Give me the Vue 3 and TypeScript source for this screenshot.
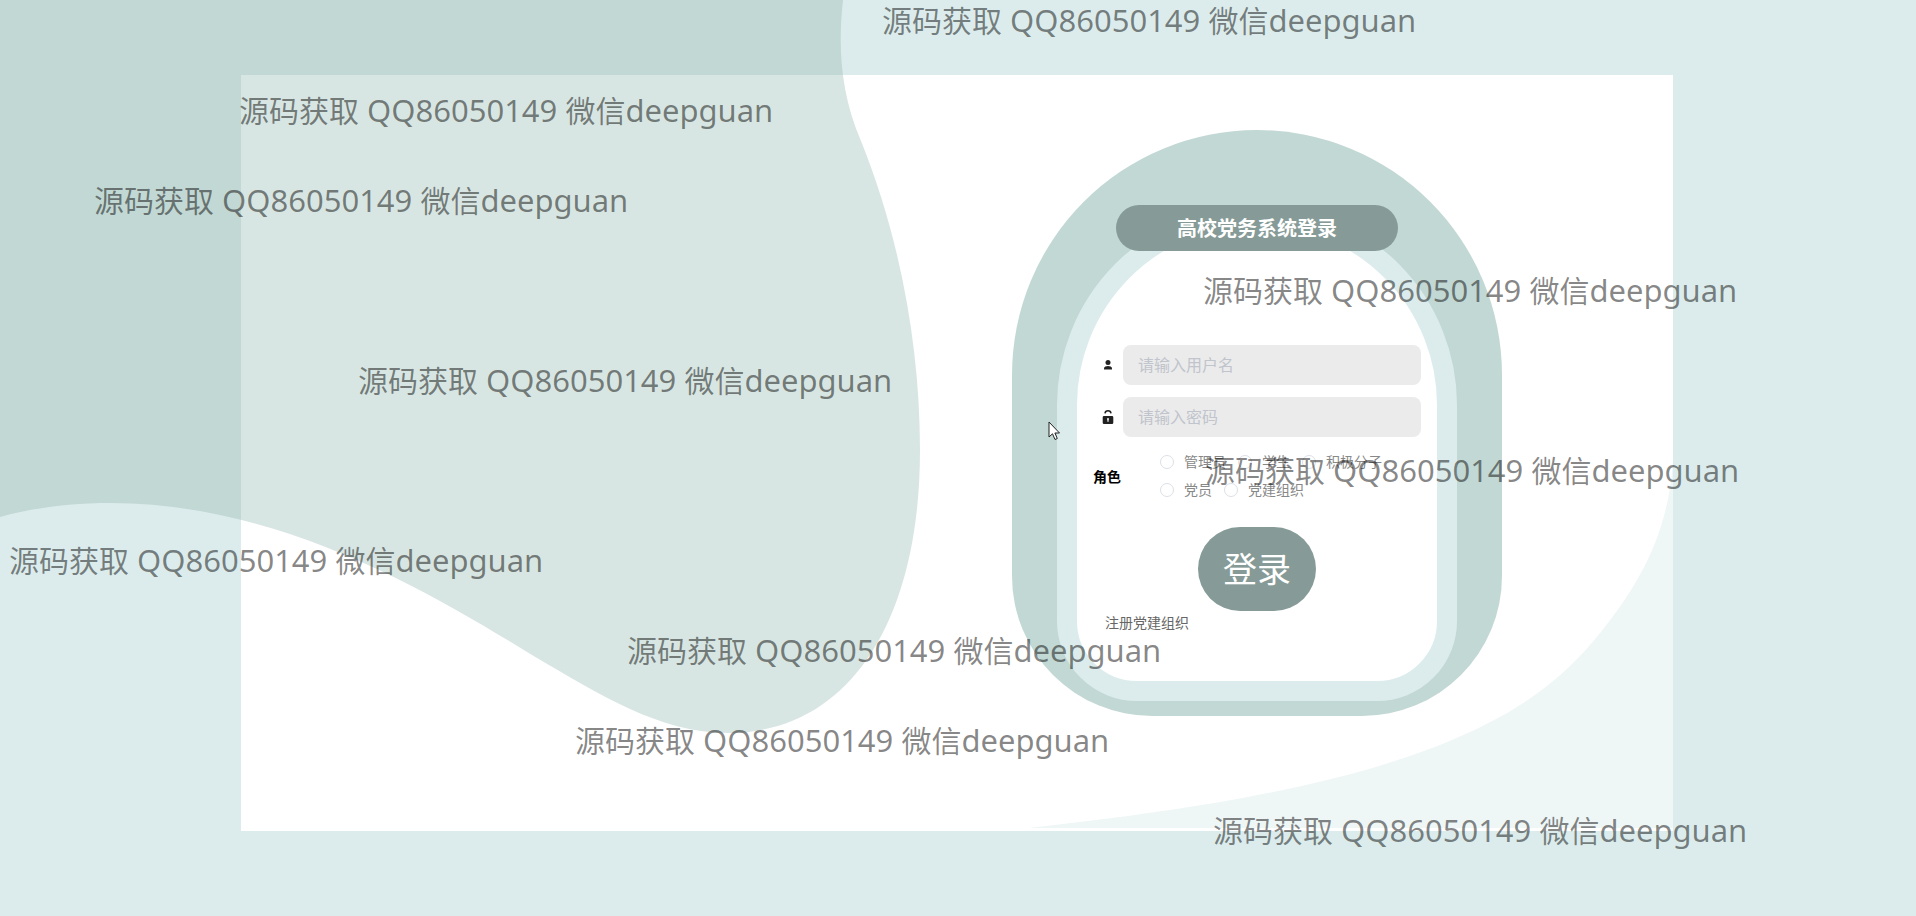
<script setup lang="ts">
import { ref } from 'vue'

interface Mark {
  x: number
  y: number
}

const username = ref('')
const password = ref('')
const role = ref('')
const roles: string[] = ['管理员', '学生', '积极分子', '党员', '党建组织']

const marks: Mark[] = [
  { x: 882, y: 20 },
  { x: 239, y: 110 },
  { x: 94, y: 200 },
  { x: 1203, y: 290 },
  { x: 358, y: 380 },
  { x: 1205, y: 470 },
  { x: 9, y: 560 },
  { x: 627, y: 650 },
  { x: 575, y: 740 },
  { x: 1213, y: 830 },
]

const place = (m: Mark) => ({
  left: `${(m.x / 1916) * 100}%`,
  top: `${(m.y / 916) * 100}%`,
})
</script>

<template>
  <main class="page">
    <svg class="scenery" viewBox="0 0 1916 916" preserveAspectRatio="none" aria-hidden="true">
      <path
        class="blob"
        d="M0 0H843C838 45 840 92 861 141C901 240 920 350 920 450C920 620 850 733 728 733C660 733 600 695 532 655C430 592 280 503 110 503C70 503 32 508 0 517Z"
      />
    </svg>

    <section class="panel">
      <svg class="swoosh" viewBox="0 0 644 378" preserveAspectRatio="none" aria-hidden="true">
        <path d="M644 0C642 75 615 130 565 190C535 226 500 252 461 272C360 325 210 355 0 378H644Z" />
      </svg>
      <form class="arch" @submit.prevent>
        <div class="card">
          <h1 class="title">高校党务系统登录</h1>
          <div class="fields">
            <label class="field">
              <svg class="icon" viewBox="0 0 16 16" role="img" aria-label="用户名">
                <circle cx="8" cy="5.600" r="2.500" />
                <path d="M4 12.500V11.200C4 9.600 6.400 8.900 8 8.900S12 9.600 12 11.200V12.500Z" />
              </svg>
              <input v-model="username" type="text" placeholder="请输入用户名" />
            </label>
            <label class="field">
              <svg class="icon" viewBox="0 0 16 16" role="img" aria-label="密码">
                <path class="shackle" d="M5 4.400C5.400 0.900 10.600 0.900 11 4.400" />
                <path
                  fill-rule="evenodd"
                  d="M4 7H12Q13.300 7 13.300 8.200V13.800Q13.300 15 12 15H4Q2.700 15 2.700 13.800V8.200Q2.700 7 4 7ZM8 9A1 1 0 0 0 7.400 10.800V12.800H8.600V10.800A1 1 0 0 0 8 9Z"
                />
              </svg>
              <input v-model="password" type="password" placeholder="请输入密码" />
            </label>
          </div>
          <fieldset class="roles" aria-labelledby="role-name">
            <span id="role-name" class="role-name">角色</span>
            <div class="options">
              <label v-for="r in roles" :key="r" class="option">
                <input v-model="role" type="radio" name="role" :value="r" />
                <span>{{ r }}</span>
              </label>
            </div>
          </fieldset>
          <button class="submit" type="submit">登录</button>
          <a class="register" href="#register">注册党建组织</a>
        </div>
      </form>
    </section>

    <div class="marks" aria-hidden="true">
      <span v-for="(m, i) in marks" :key="i" class="mark" :style="place(m)">源码获取<span class="latin"> QQ86050149 </span>微信<span class="latin">deepguan</span></span>
    </div>

    <svg class="pointer" viewBox="0 0 12 20" aria-hidden="true">
      <path d="M1 1V16L4.500 12.800L7 18.500L9.300 17.500L6.900 12H11.500Z" />
    </svg>
  </main>
</template>

<style>
body {
  margin: 0;
}
</style>

<style scoped>
.page {
  position: relative;
  box-sizing: border-box;
  min-height: 100vh;
  padding: 75px 243px 85px 241px;
  display: flex;
  overflow: hidden;
  background: #dcecec;
  font-family: "Noto Sans", "Noto Sans CJK SC", sans-serif;
}

.scenery {
  position: absolute;
  z-index: 1;
  inset: 0;
  width: 100%;
  height: 100%;
}

.blob {
  fill: #c2d8d4;
}

.panel {
  position: relative;
  flex: 1;
  display: grid;
  grid-template-columns: 771fr 490px 171fr;
  background: #fff;
}

/* Translucent veil that lightens the blob inside the panel */
.panel::before {
  content: "";
  position: absolute;
  z-index: 2;
  inset: 0;
  background: rgba(255, 255, 255, 0.36);
}

.swoosh {
  position: absolute;
  z-index: 3;
  right: 0;
  bottom: 3px;
  width: 45%;
  height: 50%;
  fill: #eff6f6;
}

.arch {
  position: relative;
  z-index: 4;
  grid-column: 2;
  align-self: start;
  box-sizing: border-box;
  margin-top: 55px;
  padding: 75px 45px 15px;
  background: #c2d8d4;
  border-radius: 245px 245px 140px 140px;
}

.card {
  display: flex;
  flex-direction: column;
  box-sizing: border-box;
  min-height: 496px;
  padding: 0 16px;
  border: 20px solid #dcecec;
  border-radius: 200px 200px 80px 80px;
  background: #fff;
}

.title {
  align-self: center;
  box-sizing: border-box;
  width: 282px;
  height: 46px;
  margin: -20px 0 0;
  border-radius: 23px;
  background: #869b97;
  color: #fff;
  font-size: 20px;
  line-height: 48px;
  font-weight: 700;
  text-align: center;
}

.fields {
  display: grid;
  gap: 12px;
  margin-top: 94px;
}

.field {
  display: grid;
  grid-template-columns: 30px 298px;
  align-items: center;
}

.icon {
  width: 16px;
  height: 16px;
  margin-left: 7px;
  fill: #222;
}

.shackle {
  fill: none;
  stroke: #222;
  stroke-width: 1.500;
}

.field input {
  box-sizing: border-box;
  width: 298px;
  height: 40px;
  padding: 0 15px;
  border: 0;
  border-radius: 8px;
  background: #ebebeb;
  color: #606266;
  font: inherit;
  font-size: 16px;
}

.field input::placeholder {
  color: #c0c4cc;
  opacity: 1;
}

.roles {
  display: flex;
  align-items: center;
  margin: 11px 0 0;
  padding: 0;
  border: 0;
}

.role-name {
  width: 67px;
  font-size: 14px;
  font-weight: 700;
}

.options {
  display: flex;
  flex-wrap: wrap;
  column-gap: 12px;
  width: 240px;
}

.option {
  display: flex;
  align-items: center;
  gap: 10px;
  height: 28px;
  color: #888;
  font-size: 14px;
  line-height: 20px;
}

.option input {
  appearance: none;
  box-sizing: border-box;
  width: 14px;
  height: 14px;
  margin: 0;
  border: 1px solid #dcdfe6;
  border-radius: 50%;
  background: #fff;
}

.submit {
  align-self: center;
  width: 118px;
  height: 84px;
  margin: 23px 0 0;
  padding: 0 0 4px;
  border: 0;
  border-radius: 42px;
  background: #869b97;
  color: #fff;
  font: inherit;
  font-size: 34px;
}

.register {
  align-self: flex-start;
  margin: 2px 0 0 12px;
  color: #666;
  font-size: 14px;
  line-height: 20px;
  text-decoration: none;
}

.marks {
  position: absolute;
  z-index: 5;
  inset: 0;
  pointer-events: none;
}

.mark {
  position: absolute;
  margin-top: -20px;
  color: rgba(0, 0, 0, 0.48);
  font-size: 30px;
  line-height: 40px;
  white-space: nowrap;
}

.latin {
  font-size: 31px;
}

.pointer {
  position: absolute;
  z-index: 6;
  left: 1048px;
  top: 421px;
  width: 12px;
  height: 20px;
  fill: #fff;
  stroke: #222;
  stroke-width: 1;
}
</style>
